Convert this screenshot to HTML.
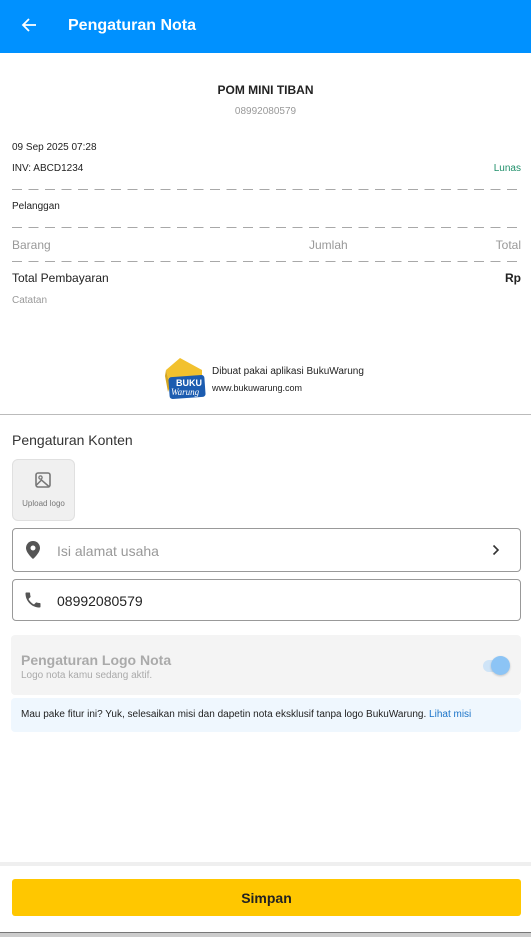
<!DOCTYPE html>
<html><head><meta charset="utf-8"><style>
*{margin:0;padding:0;box-sizing:border-box}
body{width:531px;height:937px;position:relative;background:#fff;font-family:"Liberation Sans",Roboto,sans-serif;overflow:hidden;color:#222}
.a{position:absolute;white-space:nowrap}
.dash{position:absolute;left:12px;width:509px;height:1px;background:repeating-linear-gradient(90deg,#a8a8a8 0 10px,transparent 10px 16.5px)}
</style></head><body>
<div class="a" style="left:0;top:0;width:531px;height:53px;background:#0091ff"></div>
<svg class="a" style="left:21px;top:17px" width="16" height="16" viewBox="0 0 16 16"><path d="M15 8H2M8 2L2 8l6 6" stroke="#fff" stroke-width="1.8" fill="none"/></svg>
<div class="a" style="left:68px;top:17px;color:#fff;font-weight:bold;font-size:16px">Pengaturan Nota</div>

<div class="a" style="left:0;width:531px;top:83px;text-align:center;font-weight:bold;font-size:12px">POM MINI TIBAN</div>
<div class="a" style="left:0;width:531px;top:106px;text-align:center;font-size:10px;color:#999">08992080579</div>
<div class="a" style="left:12px;top:142px;font-size:10px">09 Sep 2025 07:28</div>
<div class="a" style="left:12px;top:163px;font-size:10px">INV: ABCD1234</div>
<div class="a" style="right:10px;top:163px;font-size:10px;color:#1f8f6a">Lunas</div>
<div class="dash" style="top:189px"></div>
<div class="a" style="left:12px;top:201px;font-size:10px">Pelanggan</div>
<div class="dash" style="top:227px"></div>
<div class="a" style="left:12px;top:238px;font-size:12px;color:#999">Barang</div>
<div class="a" style="left:309px;top:238px;font-size:12px;color:#999">Jumlah</div>
<div class="a" style="right:10px;top:238px;font-size:12px;color:#999">Total</div>
<div class="dash" style="top:261px"></div>
<div class="a" style="left:12px;top:271px;font-size:12px">Total Pembayaran</div>
<div class="a" style="right:10px;top:271px;font-size:12px;font-weight:bold">Rp</div>
<div class="a" style="left:12px;top:295px;font-size:10px;color:#999">Catatan</div>

<svg class="a" style="left:162px;top:356px" width="46" height="46" viewBox="0 0 46 46"><path d="M4 14L18 2L40 14L40 24L8 30Z" fill="#f2c12e"/><path d="M4 14L8 30L6 36L3 20Z" fill="#d4a520"/><rect x="7" y="20" width="36" height="22" rx="3" fill="#1c5cb0" transform="rotate(-4 25 31)"/><text x="14" y="30" font-size="9" font-weight="bold" fill="#fff" font-family="Liberation Sans">BUKU</text><text x="9" y="39" font-size="9" font-style="italic" fill="#fff" font-family="Liberation Serif">Warung</text></svg>
<div class="a" style="left:212px;top:366px;font-size:10px">Dibuat pakai aplikasi BukuWarung</div>
<div class="a" style="left:212px;top:383px;font-size:9px">www.bukuwarung.com</div>

<div class="a" style="left:0;top:414px;width:531px;height:1px;background:#bbb"></div>
<div class="a" style="left:12px;top:432px;font-size:14px;color:#333">Pengaturan Konten</div>
<div class="a" style="left:12px;top:459px;width:63px;height:62px;background:#f0f0f0;border:1px solid #e0e0e0;border-radius:6px"></div>
<svg class="a" style="left:34px;top:471px" width="18" height="18" viewBox="0 0 18 18"><rect x="2" y="2" width="14" height="14" rx="2" fill="none" stroke="#777" stroke-width="1.6"/><circle cx="6.5" cy="6.5" r="1.6" fill="none" stroke="#777" stroke-width="1.3"/><path d="M2.5 14l5-5 8 7" fill="none" stroke="#777" stroke-width="1.5"/></svg>
<div class="a" style="left:12px;width:63px;text-align:center;top:499px;font-size:8px;color:#777">Upload logo</div>

<div class="a" style="left:12px;top:528px;width:509px;height:44px;border:1px solid #999;border-radius:4px"></div>
<svg class="a" style="left:26px;top:541px" width="14" height="18" viewBox="0 0 14 18"><path d="M7 0C3.1 0 0 3.1 0 7c0 5 7 11 7 11s7-6 7-11c0-3.9-3.1-7-7-7z" fill="#555"/><circle cx="7" cy="7" r="2.5" fill="#fff"/></svg>
<div class="a" style="left:57px;top:543px;font-size:14px;color:#999">Isi alamat usaha</div>
<svg class="a" style="left:491px;top:543px" width="10" height="14" viewBox="0 0 10 14"><path d="M2.5 2.5l4.5 4.5-4.5 4.5" stroke="#333" stroke-width="1.6" fill="none"/></svg>
<div class="a" style="left:12px;top:579px;width:509px;height:42px;border:1px solid #999;border-radius:4px"></div>
<svg class="a" style="left:23px;top:590px" width="20" height="20" viewBox="0 0 24 24"><path d="M6.6 10.8c1.4 2.8 3.8 5.1 6.6 6.6l2.2-2.2c.3-.3.7-.4 1-.2 1.1.4 2.3.6 3.6.6.6 0 1 .4 1 1V20c0 .6-.4 1-1 1C10.6 21 3 13.4 3 4c0-.6.4-1 1-1h3.5c.6 0 1 .4 1 1 0 1.3.2 2.5.6 3.6.1.3 0 .7-.2 1z" fill="#555"/></svg>
<div class="a" style="left:57px;top:593px;font-size:14px;color:#222">08992080579</div>

<div class="a" style="left:11px;top:635px;width:510px;height:60px;background:#f4f4f4;border-radius:4px"></div>
<div class="a" style="left:21px;top:652px;font-size:14px;font-weight:bold;color:#aaa">Pengaturan Logo Nota</div>
<div class="a" style="left:21px;top:670px;font-size:10px;color:#aaa">Logo nota kamu sedang aktif.</div>
<div class="a" style="left:483px;top:660px;width:26px;height:12px;border-radius:6px;background:#cfe4f7"></div>
<div class="a" style="left:491px;top:656px;width:19px;height:19px;border-radius:50%;background:#8cc4f5;box-shadow:0 1px 2px rgba(0,0,0,.2)"></div>
<div class="a" style="left:11px;top:698px;width:510px;height:34px;background:#eff7fe;border-radius:4px"></div>
<div class="a" style="left:21px;top:709px;font-size:10px;color:#222">Mau pake fitur ini? Yuk, selesaikan misi dan dapetin nota eksklusif tanpa logo BukuWarung. <span style="color:#1a73c8">Lihat misi</span></div>

<div class="a" style="left:0;top:862px;width:531px;height:4px;background:#efefef"></div>
<div class="a" style="left:12px;top:879px;width:509px;height:37px;background:#ffc700;border-radius:3px;text-align:center;line-height:38px;font-weight:bold;font-size:14px;color:#222">Simpan</div>
<div class="a" style="left:0;top:932px;width:531px;height:5px;background:#ccc;border-top:1px solid #777"></div>
</body></html>
